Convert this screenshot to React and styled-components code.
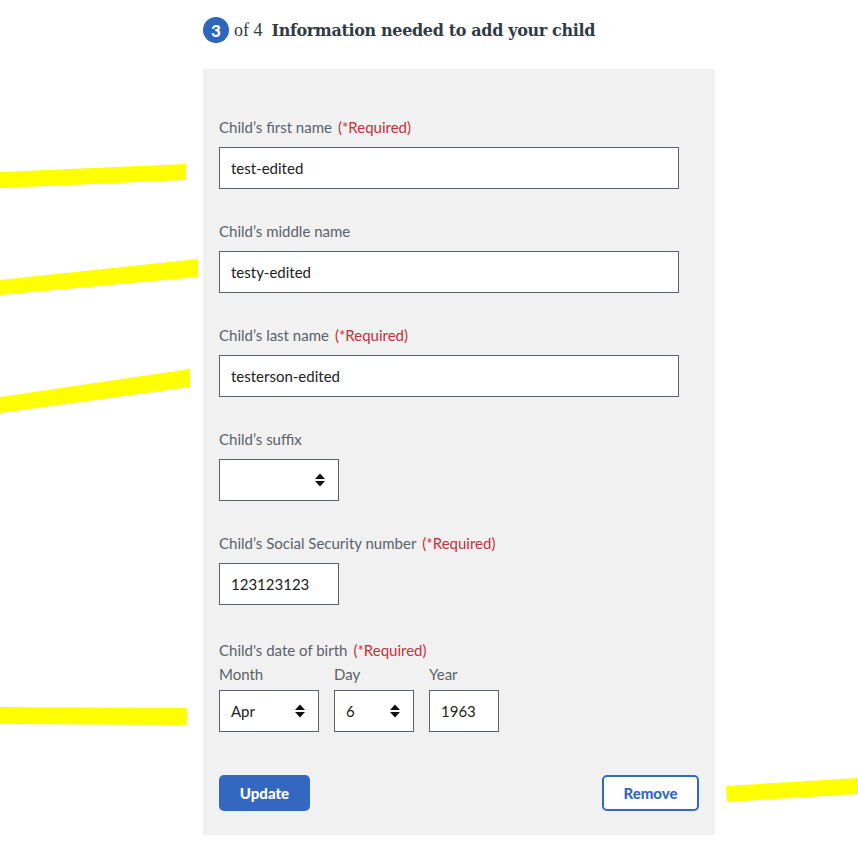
import styled, { createGlobalStyle } from "styled-components"

const Global = createGlobalStyle`
  body {
    margin: 0;
    background: #ffffff;
    font-family: "Lato", "Open Sans", sans-serif;
  }
`

const Page = styled.div`
  position: relative;
  width: 858px;
  height: 851px;
  overflow: hidden;
`

const Column = styled.div`
  width: 512px;
  margin-left: 203px;
`

const Header = styled.h2`
  display: flex;
  align-items: center;
  height: 40px;
  margin: 10px 0 19px;
  font-family: "DejaVu Serif", "Liberation Serif", serif;
  font-size: 16px;
  color: #323a45;
`

const Badge = styled.span`
  display: inline-flex;
  align-items: center;
  justify-content: center;
  width: 26px;
  height: 26px;
  border-radius: 50%;
  background: #2e65bd;
  color: #fff;
  font-family: "Lato", sans-serif;
  font-weight: 900;
  font-size: 17px;
`

const StepOf = styled.span`
  margin: 0 9px 0 5px;
  font-weight: 400;
  font-family: "Liberation Serif", serif;
  font-size: 18px;
`

const Title = styled.span`
  font-weight: 700;
  letter-spacing: -0.35px;
`

const Panel = styled.div`
  background: #f1f1f1;
  padding: 48px 16px 24px;
  display: flex;
  flex-direction: column;
`

const Field = styled.div`
  display: flex;
  flex-direction: column;
  margin-bottom: ${p => p.$gap || 32}px;
`

const Label = styled.label`
  display: block;
  height: 20px;
  line-height: 20px;
  margin-bottom: ${p => (p.$tight ? "4px" : "10px")};
  font-size: 15px;
  color: #5b616b;
`

const SubLabel = styled(Label)`
  margin-bottom: 6px;
`

const Req = styled.span`
  margin-left: 6px;
  color: #c5303a;
`

const Input = styled.input`
  box-sizing: border-box;
  width: ${p => p.$w || 460}px;
  height: 42px;
  padding: 0 11px;
  border: 1px solid #5b616b;
  background: #fff;
  font-family: "Lato", sans-serif;
  font-size: 15px;
  color: #212121;
  outline: none;
`

const SelectWrap = styled.div`
  position: relative;
  width: ${p => p.$w}px;
`

const Select = styled.select`
  box-sizing: border-box;
  width: 100%;
  height: 42px;
  padding: 0 11px;
  border: 1px solid #5b616b;
  border-radius: 0;
  background: #fff;
  appearance: none;
  font-family: "Lato", sans-serif;
  font-size: 15px;
  color: #212121;
  outline: none;
`

const Arrow = styled.svg`
  position: absolute;
  right: 13px;
  top: 13px;
  pointer-events: none;
`

const DateRow = styled.div`
  display: flex;
  gap: 15px;
`

const DatePart = styled.div`
  display: flex;
  flex-direction: column;
`

const Buttons = styled.div`
  display: flex;
  justify-content: space-between;
`

const Button = styled.button`
  height: 36px;
  padding: 0;
  border-radius: 5px;
  font-family: "Lato", sans-serif;
  font-weight: 900;
  font-size: 15px;
  cursor: pointer;
  background: ${p => (p.$outline ? "#fff" : "#3468c0")};
  color: ${p => (p.$outline ? "#3468c0" : "#fff")};
  border: ${p => (p.$outline ? "2px solid #3468c0" : "0")};
  width: ${p => p.$w}px;
`

const Marks = styled.svg`
  position: absolute;
  left: 0;
  top: 0;
  pointer-events: none;
`

function UpDown() {
  return (
    <Arrow width="12" height="16" viewBox="0 0 12 16">
      <path d="M1 7 L6 1.5 L11 7 Z M1 9 L6 14.5 L11 9 Z" fill="#111" />
    </Arrow>
  )
}

function TextField({ label, required, value, width, gap }) {
  return (
    <Field $gap={gap}>
      <Label>
        {label}
        {required && <Req>(*Required)</Req>}
      </Label>
      <Input $w={width} defaultValue={value} />
    </Field>
  )
}

export default function App() {
  return (
    <Page>
      <Global />
      <Column>
        <Header>
          <Badge>3</Badge>
          <StepOf>of 4</StepOf>
          <Title>Information needed to add your child</Title>
        </Header>
        <Panel>
          <TextField label="Child’s first name" required value="test-edited" />
          <TextField label="Child’s middle name" value="testy-edited" />
          <TextField label="Child’s last name" required value="testerson-edited" />
          <Field>
            <Label>Child’s suffix</Label>
            <SelectWrap $w={120}>
              <Select defaultValue="">
                <option value=""></option>
                <option>Jr.</option>
                <option>Sr.</option>
              </Select>
              <UpDown />
            </SelectWrap>
          </Field>
          <TextField label="Child’s Social Security number" required value="123123123" width={120} gap={35} />
          <Field $gap={43}>
            <Label $tight>
              Child's date of birth<Req>(*Required)</Req>
            </Label>
            <DateRow>
              <DatePart>
                <SubLabel>Month</SubLabel>
                <SelectWrap $w={100}>
                  <Select defaultValue="Apr">
                    <option>Apr</option>
                  </Select>
                  <UpDown />
                </SelectWrap>
              </DatePart>
              <DatePart>
                <SubLabel>Day</SubLabel>
                <SelectWrap $w={80}>
                  <Select defaultValue="6">
                    <option>6</option>
                  </Select>
                  <UpDown />
                </SelectWrap>
              </DatePart>
              <DatePart>
                <SubLabel>Year</SubLabel>
                <Input $w={70} defaultValue="1963" />
              </DatePart>
            </DateRow>
          </Field>
          <Buttons>
            <Button $w={91}>Update</Button>
            <Button $outline $w={97}>Remove</Button>
          </Buttons>
        </Panel>
      </Column>
      <Marks width="858" height="851" viewBox="0 0 858 851">
        <g fill="#ffff00">
          <polygon points="0,172 186,164 186,180 0,188" />
          <polygon points="0,280 198,259 198,277 0,295" />
          <polygon points="0,397 190,369 190,387 0,413" />
          <polygon points="0,707 187,708 187,725 0,724" />
          <polygon points="726,786 858,778 858,794 727,802" />
        </g>
      </Marks>
    </Page>
  )
}
